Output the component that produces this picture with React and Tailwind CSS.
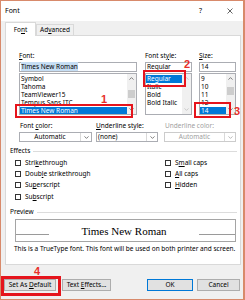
import React from "react";

const Chev = ({ dir = "up", color = "#606060" }) => (
  <svg width="5" height="3" viewBox="0 0 5 3">
    <path
      d={dir === "up" ? "M0.5 2.6L2.5 0.6L4.5 2.6" : "M0.5 0.4L2.5 2.4L4.5 0.4"}
      fill="none"
      stroke={color}
      strokeWidth="0.8"
    />
  </svg>
);

const ListBox = ({ items, selected, thumb, disabled }) => (
  <div className="mt-[1px] h-[42px] border border-[#abadb3] bg-white flex">
    <div className="flex-1 overflow-hidden pt-[1px]">
      {items.map((it, i) => (
        <div
          key={it}
          className={`h-[8px] leading-[8px] pl-[1px] whitespace-nowrap ${
            i === selected ? "bg-[#0078d7] text-white" : ""
          }`}
        >
          {it}
        </div>
      ))}
    </div>
    <div className="w-[9px] bg-[#f0f0f0] flex flex-col items-center justify-between py-[3px]">
      <Chev dir="up" color={disabled ? "#c0c0c0" : "#606060"} />
      <div className="flex-1 w-full relative">
        {thumb && (
          <div
            className="absolute left-[1px] right-[1px] bg-[#cdcdcd]"
            style={{ top: thumb[0], height: thumb[1] }}
          />
        )}
      </div>
      <Chev dir="down" color={disabled ? "#c0c0c0" : "#606060"} />
    </div>
  </div>
);

const Combo = ({ text, center, disabled, w }) => (
  <div
    className={`${w} h-[10px] border ${
      disabled ? "border-[#cccccc] text-[#a0a0a0]" : "border-[#abadb3]"
    } bg-white flex`}
  >
    <div className={`flex-1 leading-[8px] ${center ? "text-center" : "pl-[1px]"}`}>{text}</div>
    <div className="w-[11px] border-l border-[#d9d9d9] flex items-center justify-center">
      <Chev dir="down" color={disabled ? "#a8a8a8" : "#606060"} />
    </div>
  </div>
);

const Check = ({ children }) => (
  <div className="h-[11.3px] flex items-center">
    <div className="w-[6px] h-[6px] border border-[#333333] bg-white mr-[4px]" />
    <span className="leading-[8px]">{children}</span>
  </div>
);

const Btn = ({ children, w, def }) => (
  <div
    className={`${w} h-[12px] flex items-center justify-center bg-[#e1e1e1] border ${
      def ? "border-[#0078d7]" : "border-[#adadad]"
    }`}
  >
    <span className="whitespace-nowrap">{children}</span>
  </div>
);

export default function App() {
  return (
    <div className="w-[245px] h-[300px] relative overflow-hidden border border-r-2 border-[#d88a6b] bg-[#f0f0f0] flex flex-col font-['Noto_Sans',sans-serif] text-[6.5px] text-black">
      {/* title bar */}
      <div className="h-[20px] bg-white flex items-center pl-[4px] shrink-0">
        <span className="text-[7px]">Font</span>
        <span className="ml-auto mr-[25px] text-[7px]">?</span>
        <svg width="6" height="6" viewBox="0 0 6 6" className="mr-[10px]">
          <path d="M0.5 0.5L5.5 5.5M5.5 0.5L0.5 5.5" stroke="#222" strokeWidth="0.7" />
        </svg>
      </div>

      {/* tabs */}
      <div className="flex items-end h-[14px] pl-[4px] shrink-0">
        <div className="relative z-10 -mb-px w-[31px] h-[14px] bg-white border border-b-0 border-[#d9d9d9] flex items-center justify-center">
          <span>
            Fo<u>n</u>t
          </span>
        </div>
        <div className="w-[38px] h-[11px] border border-b-0 border-[#d9d9d9] flex items-center justify-center">
          <span>
            Ad<u>v</u>anced
          </span>
        </div>
      </div>

      {/* panel */}
      <div className="ml-[4px] w-[236px] h-[230px] bg-white border border-[#d9d9d9] shrink-0">
        <div className="pt-[16px] pl-[13px] flex">
          <div className="w-[118px]">
            <div className="h-[8px] leading-[8px]">
              <u>F</u>ont:
            </div>
            <div className="mt-[2px] h-[10px] border border-[#abadb3] leading-[8px] pl-[1px]">
              <span className="bg-[#c6def4]">Times New Roman</span>
            </div>
            <ListBox
              items={["Symbol", "Tahoma", "TeamViewer15", "Tempus Sans ITC", "Times New Roman"]}
              selected={4}
              thumb={[10, 8]}
            />
          </div>
          <div className="w-[47px] ml-[8px]">
            <div className="h-[8px] leading-[8px]">
              Font st<u>y</u>le:
            </div>
            <div className="mt-[2px] h-[10px] border border-[#abadb3] leading-[8px] pl-[1px]">Regular</div>
            <ListBox items={["Regular", "Italic", "Bold", "Bold Italic"]} selected={0} disabled />
          </div>
          <div className="w-[37px] ml-[7px]">
            <div className="h-[8px] leading-[8px]">
              <u>S</u>ize:
            </div>
            <div className="mt-[2px] h-[10px] border border-[#abadb3] leading-[8px] pl-[1px]">14</div>
            <ListBox items={["9", "10", "11", "12", "14"]} selected={4} thumb={[7, 8]} />
          </div>
        </div>

        {/* font color row */}
        <div className="mt-[7px] pl-[13px] flex">
          <div className="w-[73px]">
            <div className="h-[8px] leading-[8px] pl-[1px]">
              Font <u>c</u>olor:
            </div>
            <div className="mt-[2px]">
              <Combo text="Automatic" center w="w-[73px]" />
            </div>
          </div>
          <div className="w-[62px] ml-[4px]">
            <div className="h-[8px] leading-[8px]">
              <u>U</u>nderline style:
            </div>
            <div className="mt-[2px]">
              <Combo text="(none)" w="w-[62px]" />
            </div>
          </div>
          <div className="w-[72px] ml-[6px]">
            <div className="h-[8px] leading-[8px] text-[#a0a0a0] pl-[1px]">Underline color:</div>
            <div className="mt-[2px]">
              <Combo text="Automatic" center disabled w="w-[72px]" />
            </div>
          </div>
        </div>

        {/* effects */}
        <div className="mt-[5px] pl-[4px] pr-[3px] flex items-center h-[8px]">
          <span className="leading-[8px]">Effects</span>
          <div className="flex-1 ml-[3px] h-px bg-[#dcdcdc]" />
        </div>
        <div className="mt-[2px] pl-[9px] flex">
          <div className="w-[150px]">
            <Check>
              Stri<u>k</u>ethrough
            </Check>
            <Check>
              Doub<u>l</u>e strikethrough
            </Check>
            <Check>
              Su<u>p</u>erscript
            </Check>
            <Check>
              Su<u>b</u>script
            </Check>
          </div>
          <div>
            <Check>
              S<u>m</u>all caps
            </Check>
            <Check>
              <u>A</u>ll caps
            </Check>
            <Check>
              <u>H</u>idden
            </Check>
          </div>
        </div>

        {/* preview */}
        <div className="mt-[6px] pl-[4px] pr-[3px] flex items-center h-[8px]">
          <span className="leading-[8px]">Preview</span>
          <div className="flex-1 ml-[3px] h-px bg-[#dcdcdc]" />
        </div>
        <div className="mt-[3px] ml-[9px] w-[221px] h-[23px] border border-[#a5a5a5] flex items-center">
          <div className="w-[33px] h-px bg-[#9a9a9a] mt-[8px]" />
          <div className="flex-1 text-center font-['Liberation_Serif',serif] text-[11px] leading-[12px]">
            Times New Roman
          </div>
          <div className="w-[36px] h-px bg-[#9a9a9a] mt-[8px]" />
        </div>
        <div className="mt-[3px] pl-[8px] h-[8px] leading-[8px] whitespace-nowrap">
          This is a TrueType font. This font will be used on both printer and screen.
        </div>
      </div>

      {/* buttons */}
      <div className="mt-[14px] pl-[3px] flex">
        <Btn w="w-[52px]">
          Set As <u>D</u>efault
        </Btn>
        <div className="ml-[6px]">
          <Btn w="w-[49px]">
            Text <u>E</u>ffects...
          </Btn>
        </div>
        <div className="ml-[36px]">
          <Btn w="w-[46px]" def>
            OK
          </Btn>
        </div>
        <div className="ml-[4px]">
          <Btn w="w-[43px]">Cancel</Btn>
        </div>
      </div>

      {/* annotations */}
      <div className="absolute left-[14px] top-[103px] w-[118px] h-[14px] border-2 border-[#e5141c]" />
      <div className="absolute left-[142px] top-[69px] w-[43px] h-[17px] border-2 border-[#e5141c]" />
      <div className="absolute left-[193px] top-[101px] w-[37px] h-[16px] border-2 border-[#e5141c]" />
      <div className="absolute left-0 top-[275px] w-[60px] h-[20px] border-[3px] border-[#e5141c]" />
      <span className="absolute left-[100px] top-[92px] font-['Liberation_Sans',sans-serif] font-bold text-[11px] leading-[12px] text-[#e8302a]">
        1
      </span>
      <span className="absolute left-[183px] top-[57px] font-['Liberation_Sans',sans-serif] font-bold text-[11px] leading-[12px] text-[#e8302a]">
        2
      </span>
      <span className="absolute left-[233px] top-[104px] font-['Liberation_Sans',sans-serif] font-bold text-[11px] leading-[12px] text-[#e8302a]">
        3
      </span>
      <span className="absolute left-[33px] top-[264px] font-['Liberation_Sans',sans-serif] font-bold text-[11px] leading-[12px] text-[#e8302a]">
        4
      </span>
    </div>
  );
}
